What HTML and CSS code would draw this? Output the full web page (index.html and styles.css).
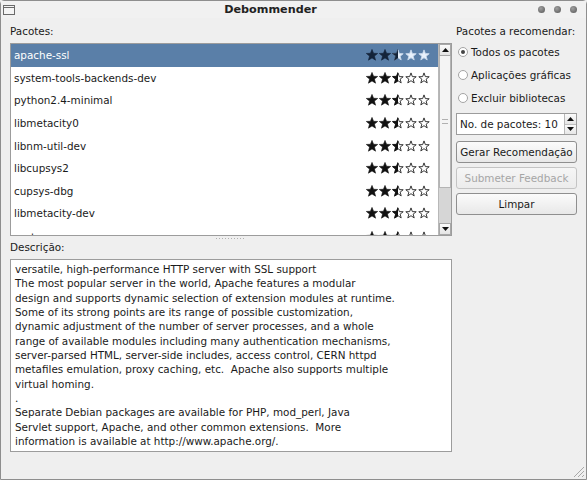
FILE: index.html
```html
<!DOCTYPE html>
<html>
<head>
<meta charset="utf-8">
<link rel="stylesheet" href="styles.css">
</head>
<body>
<svg class="defs" width="0" height="0" aria-hidden="true">
  <defs>
    <clipPath id="lefthalf"><rect x="0" y="0" width="6" height="12"/></clipPath>
    <symbol id="star-full" viewBox="0 0 12 12">
      <path d="M6 .4 L7.55 4.25 L11.7 4.45 L8.45 7.1 L9.55 11.2 L6 8.9 L2.45 11.2 L3.55 7.1 L.3 4.45 L4.45 4.25Z" fill="var(--sfull)" stroke="var(--sfull)" stroke-width=".6" stroke-linejoin="round"/>
    </symbol>
    <symbol id="star-empty" viewBox="0 0 12 12">
      <path d="M6 .9 L7.35 4.6 L11.2 4.75 L8.15 7.15 L9.2 10.9 L6 8.7 L2.8 10.9 L3.85 7.15 L.8 4.75 L4.65 4.6Z" fill="var(--sempty)" stroke="var(--sline)" stroke-width=".9" stroke-linejoin="round"/>
    </symbol>
    <symbol id="star-half" viewBox="0 0 12 12">
      <path d="M6 .9 L7.35 4.6 L11.2 4.75 L8.15 7.15 L9.2 10.9 L6 8.7 L2.8 10.9 L3.85 7.15 L.8 4.75 L4.65 4.6Z" fill="var(--sempty)" stroke="var(--sline)" stroke-width=".9" stroke-linejoin="round"/>
      <path clip-path="url(#lefthalf)" d="M6 .4 L7.55 4.25 L11.7 4.45 L8.45 7.1 L9.55 11.2 L6 8.9 L2.45 11.2 L3.55 7.1 L.3 4.45 L4.45 4.25Z" fill="var(--sfull)" stroke="var(--sfull)" stroke-width=".6" stroke-linejoin="round"/>
    </symbol>
  </defs>
</svg>

<div class="window">
  <div class="titlebar">
    <svg class="winicon" width="12" height="10" viewBox="0 0 12 10"><rect x=".5" y=".5" width="11" height="9" fill="#f4f4f4" stroke="#6a6a6a"/><line x1="1" y1="2.5" x2="11" y2="2.5" stroke="#6a6a6a"/></svg>
    <div class="title">Debommender</div>
    <div class="wbtns">
      <span class="wbtn"></span><span class="wbtn"></span><span class="wbtn"></span>
    </div>
  </div>

  <div class="content">
    <div class="leftcol">
      <div class="label">Pacotes:</div>
      <div class="listbox">
        <div class="rows">
          <div class="row selected"><span class="name">apache-ssl</span><svg class="stars" width="65" height="12" viewBox="0 0 65 12"><use href="#star-full" x="0" width="12" height="12"/><use href="#star-full" x="13" width="12" height="12"/><use href="#star-half" x="26" width="12" height="12"/><use href="#star-empty" x="39" width="12" height="12"/><use href="#star-empty" x="52" width="12" height="12"/></svg></div>
          <div class="row"><span class="name">system-tools-backends-dev</span><svg class="stars" width="65" height="12" viewBox="0 0 65 12"><use href="#star-full" x="0" width="12" height="12"/><use href="#star-full" x="13" width="12" height="12"/><use href="#star-half" x="26" width="12" height="12"/><use href="#star-empty" x="39" width="12" height="12"/><use href="#star-empty" x="52" width="12" height="12"/></svg></div>
          <div class="row"><span class="name">python2.4-minimal</span><svg class="stars" width="65" height="12" viewBox="0 0 65 12"><use href="#star-full" x="0" width="12" height="12"/><use href="#star-full" x="13" width="12" height="12"/><use href="#star-half" x="26" width="12" height="12"/><use href="#star-empty" x="39" width="12" height="12"/><use href="#star-empty" x="52" width="12" height="12"/></svg></div>
          <div class="row"><span class="name">libmetacity0</span><svg class="stars" width="65" height="12" viewBox="0 0 65 12"><use href="#star-full" x="0" width="12" height="12"/><use href="#star-full" x="13" width="12" height="12"/><use href="#star-half" x="26" width="12" height="12"/><use href="#star-empty" x="39" width="12" height="12"/><use href="#star-empty" x="52" width="12" height="12"/></svg></div>
          <div class="row"><span class="name">libnm-util-dev</span><svg class="stars" width="65" height="12" viewBox="0 0 65 12"><use href="#star-full" x="0" width="12" height="12"/><use href="#star-full" x="13" width="12" height="12"/><use href="#star-half" x="26" width="12" height="12"/><use href="#star-empty" x="39" width="12" height="12"/><use href="#star-empty" x="52" width="12" height="12"/></svg></div>
          <div class="row"><span class="name">libcupsys2</span><svg class="stars" width="65" height="12" viewBox="0 0 65 12"><use href="#star-full" x="0" width="12" height="12"/><use href="#star-full" x="13" width="12" height="12"/><use href="#star-half" x="26" width="12" height="12"/><use href="#star-empty" x="39" width="12" height="12"/><use href="#star-empty" x="52" width="12" height="12"/></svg></div>
          <div class="row"><span class="name">cupsys-dbg</span><svg class="stars" width="65" height="12" viewBox="0 0 65 12"><use href="#star-full" x="0" width="12" height="12"/><use href="#star-full" x="13" width="12" height="12"/><use href="#star-half" x="26" width="12" height="12"/><use href="#star-empty" x="39" width="12" height="12"/><use href="#star-empty" x="52" width="12" height="12"/></svg></div>
          <div class="row"><span class="name">libmetacity-dev</span><svg class="stars" width="65" height="12" viewBox="0 0 65 12"><use href="#star-full" x="0" width="12" height="12"/><use href="#star-full" x="13" width="12" height="12"/><use href="#star-half" x="26" width="12" height="12"/><use href="#star-empty" x="39" width="12" height="12"/><use href="#star-empty" x="52" width="12" height="12"/></svg></div>
          <div class="row partial"><span class="name">system-common</span><svg class="stars" width="65" height="12" viewBox="0 0 65 12"><use href="#star-full" x="0" width="12" height="12"/><use href="#star-full" x="13" width="12" height="12"/><use href="#star-half" x="26" width="12" height="12"/><use href="#star-empty" x="39" width="12" height="12"/><use href="#star-empty" x="52" width="12" height="12"/></svg></div>
        </div>
        <div class="scrollbar">
          <div class="sb-btn"><svg width="7" height="4" viewBox="0 0 7 4"><path d="M0 4 L3.5 0 L7 4Z" fill="#111"/></svg></div>
          <div class="sb-thumb"><span class="grip"></span></div>
          <div class="sb-track"></div>
          <div class="sb-btn"><svg width="7" height="4" viewBox="0 0 7 4"><path d="M0 0 L3.5 4 L7 0Z" fill="#111"/></svg></div>
        </div>
      </div>
      <div class="splitter"><span class="dots"></span></div>
      <div class="label">Descrição:</div>
      <div class="textbox">versatile, high-performance HTTP server with SSL support
The most popular server in the world, Apache features a modular
design and supports dynamic selection of extension modules at runtime.
Some of its strong points are its range of possible customization,
dynamic adjustment of the number of server processes, and a whole
range of available modules including many authentication mechanisms,
server-parsed HTML, server-side includes, access control, CERN httpd
metafiles emulation, proxy caching, etc.  Apache also supports multiple
virtual homing.
.
Separate Debian packages are available for PHP, mod_perl, Java
Servlet support, Apache, and other common extensions.  More
information is available at http://www.apache.org/.</div>
    </div>

    <div class="rightcol">
      <div class="label">Pacotes a recomendar:</div>
      <div class="radio"><span class="rbox checked"></span><span>Todos os pacotes</span></div>
      <div class="radio"><span class="rbox"></span><span>Aplicações gráficas</span></div>
      <div class="radio"><span class="rbox"></span><span>Excluir bibliotecas</span></div>
      <div class="spinbox">
        <div class="spintext">No. de pacotes: 10</div>
        <div class="spinbtns">
          <div class="spinbtn"><svg width="7" height="4" viewBox="0 0 7 4"><path d="M0 4 L3.5 0 L7 4Z" fill="#111"/></svg></div>
          <div class="spinbtn"><svg width="7" height="4" viewBox="0 0 7 4"><path d="M0 0 L3.5 4 L7 0Z" fill="#111"/></svg></div>
        </div>
      </div>
      <div class="buttons">
        <div class="button">Gerar Recomendação</div>
        <div class="button disabled">Submeter Feedback</div>
        <div class="button">Limpar</div>
      </div>
    </div>
  </div>

  <div class="footer">
    <svg class="grip-corner" width="13" height="13" viewBox="0 0 13 13"><path d="M12 2 L2 12 M12 6 L6 12 M12 10 L10 12" stroke="#a8a8a8" stroke-width="1"/></svg>
  </div>
</div>
</body>
</html>
```

FILE: styles.css
```css
* { box-sizing: border-box; }
html, body { margin: 0; padding: 0; }
body {
  width: 587px;
  height: 480px;
  overflow: hidden;
  background: #efefef;
  font-family: "DejaVu Sans", "Liberation Sans", sans-serif;
  font-size: 10.4px;
  color: #1a1a1a;
}
.defs { position: absolute; width: 0; height: 0; }

.window {
  width: 587px;
  height: 480px;
  border: 1px solid #8e8e8e;
  border-radius: 4px 4px 0 0;
  background: #efefef;
  display: flex;
  flex-direction: column;
}

.titlebar {
  height: 17px;
  display: flex;
  align-items: center;
  padding: 0 9px 0 2px;
  background: #f1f1f1;
}
.winicon { flex: none; margin-top: 1px; }
.title {
  flex: 1;
  text-align: center;
  font-weight: bold;
  font-size: 11.2px;
  color: #222;
  padding-right: 12px;
}
.wbtns { display: flex; gap: 9px; }
.wbtn {
  width: 7px; height: 7px;
  border-radius: 50%;
  background: radial-gradient(circle at 40% 35%, #a0a0a0, #555);
}

.content {
  display: flex;
  gap: 4px;
  padding: 6px 9px 0 9px;
  flex: 1;
}

.label { height: 14px; line-height: 14px; white-space: nowrap; }

.leftcol { width: 442px; display: flex; flex-direction: column; }
.leftcol > .label { margin-bottom: 5px; }

.listbox {
  height: 193px;
  border: 1px solid #9c9c9c;
  background: #fff;
  display: flex;
}
.rows { flex: 1; overflow: hidden; }
.row {
  height: 22.6px;
  display: flex;
  align-items: center;
  justify-content: space-between;
  padding: 0 7px 0 3px;
  --sfull: #111;
  --sempty: #fff;
  --sline: #222;
}
.row.partial { height: 11px; overflow: hidden; align-items: flex-start; padding-top: 6px; }
.row.selected {
  background: #5a7fa8;
  color: #fff;
  --sfull: #14243a;
  --sempty: #e8f1fb;
  --sline: #c9d9ec;
}
.stars { display: block; flex: none; }

.scrollbar {
  width: 13px;
  display: flex;
  flex-direction: column;
  border-left: 1px solid #b8b8b8;
  background: #efefef;
}
.sb-btn {
  height: 12px;
  display: flex;
  align-items: center;
  justify-content: center;
  background: linear-gradient(#fafafa, #e4e4e4);
  border: 1px solid #a8a8a8;
}
.sb-thumb {
  height: 132px;
  background: #f4f4f4;
  border: 1px solid #b4b4b4;
  border-top: none;
  display: flex;
  align-items: center;
  justify-content: center;
}
.grip {
  width: 6px; height: 5px;
  border-top: 1px solid #b0b0b0;
  border-bottom: 1px solid #b0b0b0;
}
.sb-track { flex: 1; background: #d6d6d6; }

.splitter {
  height: 4px;
  display: flex;
  justify-content: center;
  align-items: center;
}
.dots {
  width: 30px; height: 1px;
  background: repeating-linear-gradient(90deg, #b0b0b0 0 1px, transparent 1px 3px);
}
.splitter + .label { margin-bottom: 5px; }

.textbox {
  height: 193px;
  border: 1px solid #9c9c9c;
  background: #fff;
  padding: 2px 4px;
  white-space: pre;
  line-height: 14.33px;
  overflow: hidden;
}

.rightcol { width: 121px; display: flex; flex-direction: column; }
.rightcol > .label { margin-bottom: 2px; }
.radio {
  height: 23px;
  display: flex;
  align-items: center;
  gap: 3px;
  padding-left: 2px;
  white-space: nowrap;
}
.rbox {
  width: 10px; height: 10px;
  border-radius: 50%;
  border: 1px solid #a4a4a4;
  background: #fff;
  display: flex;
  align-items: center;
  justify-content: center;
  flex: none;
}
.rbox.checked::after {
  content: "";
  width: 4px; height: 4px;
  border-radius: 50%;
  background: #444;
}

.spinbox {
  margin-top: 4px;
  height: 22px;
  border: 1px solid #9c9c9c;
  background: #fff;
  display: flex;
}
.spintext { flex: 1; padding-left: 3px; line-height: 20px; white-space: nowrap; }
.spinbtns { width: 12px; display: flex; flex-direction: column; border-left: 1px solid #b8b8b8; }
.spinbtn {
  flex: 1;
  display: flex;
  align-items: center;
  justify-content: center;
  background: linear-gradient(#fbfbfb, #e6e6e6);
}
.spinbtn + .spinbtn { border-top: 1px solid #c0c0c0; }

.buttons { margin-top: 6px; display: flex; flex-direction: column; gap: 4px; }
.button {
  height: 22px;
  border: 1px solid #8f8f8f;
  border-radius: 3px;
  background: linear-gradient(#fbfbfb, #e8e8e8);
  display: flex;
  align-items: center;
  justify-content: center;
  white-space: nowrap;
}
.button.disabled { color: #a6a6a6; border-color: #c4c4c4; background: linear-gradient(#f6f6f6, #ececec); }

.footer { height: 14px; display: flex; justify-content: flex-end; align-items: flex-end; padding: 0 1px 1px 0; }
```
